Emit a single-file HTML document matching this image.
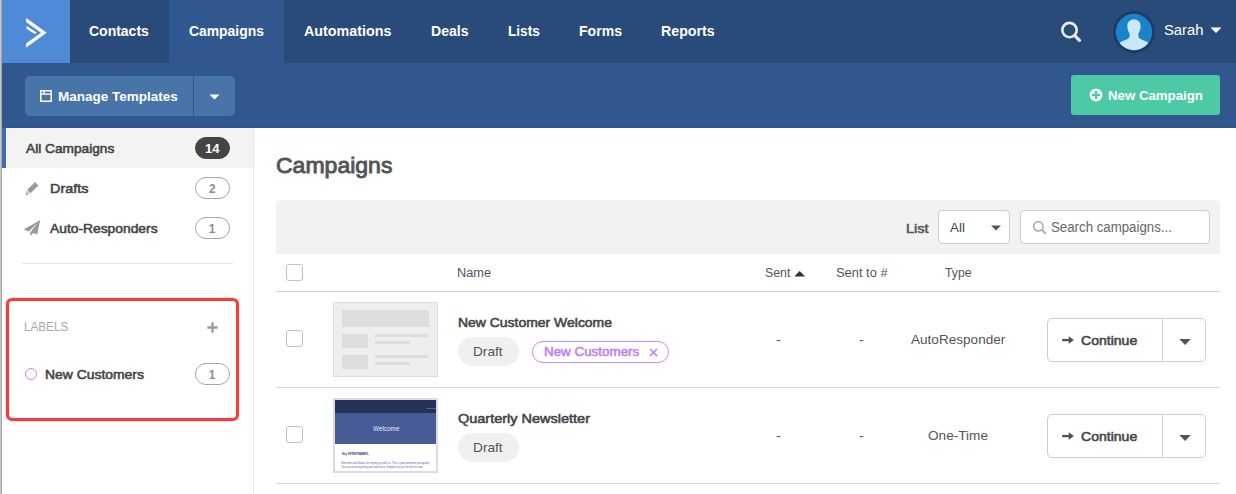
<!DOCTYPE html>
<html lang="en">
<head>
<meta charset="utf-8">
<title>Campaigns</title>
<style>
*{box-sizing:border-box;margin:0;padding:0}
html,body{width:1236px;height:494px;overflow:hidden;background:#fff}
body{position:relative;font-family:"Liberation Sans",sans-serif;color:#444;font-size:13px}
.abs{position:absolute}
.t{position:absolute;white-space:nowrap;line-height:1;transform-origin:0 0}
#strip{left:0;top:0;width:2px;height:494px;background:#a6a6a6;border-left:1px solid #c8c8c8}
#nav{left:2px;top:0;width:1234px;height:63px;background:#284b7a}
#logo{left:2px;top:0;width:68px;height:63px;background:#4f8ad6}
#navact{left:169px;top:0;width:115px;height:63px;background:#30588f}
#sub{left:2px;top:63px;width:1234px;height:65px;background:#30588f;border-bottom:1px solid #2b5288}
.nv{color:#fff;font-weight:bold;font-size:15px;top:23px}
#mt{left:25px;top:76px;width:210px;height:40px;background:#4874aa;border-radius:5px}
#mtdiv{left:193px;top:76px;width:1px;height:40px;background:#2c5389}
#nc{left:1071px;top:75px;width:149px;height:40px;background:#4ec9a6;border-radius:3px}
#side{left:2px;top:128px;width:252px;height:366px;background:#fff;border-right:1px solid #e4e4e4}
#sact{left:2px;top:128px;width:251px;height:40px;background:#f3f3f3;border-left:4px solid #3f6db3}
.sb{font-weight:normal;font-size:13px;color:#444;-webkit-text-stroke:0.55px #444}
.badge{position:absolute;left:195px;width:35px;height:22px;border-radius:11px;border:1px solid #a6a6a6;background:#fff}
.bt{font-weight:bold;font-size:12px;color:#8e8e8e}
.badge.dark{background:#444;border-color:#444;color:#fff}
#sdiv{left:22px;top:263px;width:211px;height:1px;background:#e2e2e2}
#red{left:6px;top:298px;width:233px;height:122.500px;border:3px solid #f53b3b;border-radius:6px;box-shadow:0 0 1.500px rgba(245,59,59,.7), inset 0 0 1px rgba(245,59,59,.6)}
#tool{left:276px;top:200px;width:944px;height:54px;background:#f2f2f2;border-radius:4px 4px 0 0}
.inp{position:absolute;top:210px;height:34px;background:#fff;border:1px solid #ccc;border-radius:4px}
.hl{position:absolute;left:276px;width:944px;height:1px;background:#ddd}
.cb{position:absolute;left:286px;width:17px;height:17px;border:1px solid #c2c2c2;border-radius:3px;background:#fff}
.th{font-size:12.5px;color:#555;top:266px}
.td{font-size:13.5px;color:#555}
.ttl{font-weight:normal;font-size:13px;color:#444;-webkit-text-stroke:0.55px #444}
.pill{position:absolute;left:458px;width:61px;height:29px;border-radius:14.5px;background:#f0f0f0}
.pt{font-size:13px;color:#555}
.btn{position:absolute;left:1047px;width:159px;height:44px;border:1px solid #ccc;border-radius:5px;background:#fff}
.btn i{position:absolute;left:114px;top:0;width:1px;height:42px;background:#ccc}
.thumb{position:absolute;left:333px;width:105px;height:75px;border:1px solid #ddd;background:#eee;overflow:hidden}
</style>
</head>
<body>
<div id="nav" class="abs"></div>
<div id="sub" class="abs"></div>
<div id="logo" class="abs"></div>
<div id="navact" class="abs"></div>
<div id="strip" class="abs"></div>
<svg class="abs" style="left:20px;top:12px" width="34" height="40" viewBox="20 12 34 40"><path d="M26.300 18.300 L46.400 32.700 L26.300 47.300 L26.300 43.500 L41.300 32.700 L26.300 22.100 Z" fill="#fff" stroke="#fff" stroke-width="0.400" stroke-linejoin="round"/><path d="M26.600 26.000 L36.800 32.400 L35.000 33.900 L26.600 28.900 Z" fill="#fff"/></svg>
<span id="t1" class="t nv" style="left:89.4px;top:23px;font-size:15px;transform:scaleX(0.932)">Contacts</span>
<span id="t2" class="t nv" style="left:189.1px;top:23px;font-size:15px;transform:scaleX(0.926)">Campaigns</span>
<span id="t3" class="t nv" style="left:303.7px;top:23px;font-size:15px;transform:scaleX(0.954)">Automations</span>
<span id="t4" class="t nv" style="left:430.9px;top:23px;font-size:15px;transform:scaleX(0.937)">Deals</span>
<span id="t5" class="t nv" style="left:507.9px;top:23px;font-size:15px;transform:scaleX(0.908)">Lists</span>
<span id="t6" class="t nv" style="left:578.6px;top:23px;font-size:15px;transform:scaleX(0.937)">Forms</span>
<span id="t7" class="t nv" style="left:660.7px;top:23px;font-size:15px;transform:scaleX(0.946)">Reports</span>
<svg class="abs" style="left:1058px;top:18px" width="28" height="28" viewBox="1058 18 28 28"><circle cx="1069.500" cy="30.100" r="7.200" fill="none" stroke="#e9ebf0" stroke-width="2.600"/><path d="M1074.800 35.600 L1079.500 40.300" stroke="#e9ebf0" stroke-width="3.200" stroke-linecap="round"/></svg>
<svg class="abs" style="left:1113px;top:11px" width="42" height="42" viewBox="0 0 42 42"><defs><clipPath id="av"><circle cx="21" cy="21" r="18.200"/></clipPath></defs><circle cx="21" cy="21" r="20.900" fill="#1f3a63"/><circle cx="21" cy="21" r="18.200" fill="#1b82cc"/><g clip-path="url(#av)" fill="#c9e9fb"><path d="M21 8.600 c4.200 0 6.600 2.600 6.600 6.400 c0 2.200 -0.400 4.400 -1.400 6 c-0.500 0.900 -0.800 1.600 -0.800 2.600 v1.600 c0 1.400 1.200 2.400 3 3.200 c3.400 1.500 7.600 2.600 9.600 5.600 v8 h-34 v-8 c2 -3 6.200 -4.100 9.600 -5.600 c1.800 -0.800 3 -1.800 3 -3.200 v-1.600 c0 -1 -0.300 -1.700 -0.800 -2.600 c-1 -1.600 -1.400 -3.800 -1.400 -6 c0 -3.800 2.400 -6.400 6.600 -6.400z"/></g></svg>
<span id="t8" class="t" style="left:1164.4px;top:23px;color:#fff;font-size:14px;transform:scaleX(1.055)">Sarah</span>
<svg class="abs" style="left:1209.600px;top:26.800px" width="12" height="7" viewBox="0 0 12 7"><path d="M0.500 0.500 h11 l-5.500 5.500z" fill="#fff"/></svg>

<div id="mt" class="abs"></div>
<div id="mtdiv" class="abs"></div>
<svg class="abs" style="left:40px;top:90px" width="12" height="12" viewBox="0 0 12 12"><rect x="0.750" y="0.750" width="10.500" height="10.500" fill="none" stroke="#fff" stroke-width="1.500"/><path d="M0.750 4.200 h10.500 M4 0.750 v3.400" stroke="#fff" stroke-width="1.300" fill="none"/></svg>
<span id="t9" class="t" style="left:57.6px;top:90px;color:#fff;font-weight:bold;font-size:13px;transform:scaleX(1.039)">Manage Templates</span>
<svg class="abs" style="left:209px;top:94px" width="11" height="6" viewBox="0 0 11 6"><path d="M0.500 0.500 h10 l-5 5z" fill="#fff"/></svg>
<div id="nc" class="abs"></div>
<svg class="abs" style="left:1089px;top:88px" width="14" height="14" viewBox="0 0 14 14"><circle cx="7" cy="7" r="6.400" fill="#fff"/><path d="M7 3 v8 M3 7 h8" stroke="#4ec9a6" stroke-width="2.400"/></svg>
<span id="t10" class="t" style="left:1108.4px;top:89px;color:#fff;font-weight:bold;font-size:13px;transform:scaleX(1.018)">New Campaign</span>

<div id="side" class="abs"></div>
<div id="sact" class="abs"></div>
<span id="t11" class="t sb" style="left:26.1px;top:142px;font-size:13px;transform:scaleX(1.053)">All Campaigns</span>
<span class="badge dark" style="top:137px"></span><span id="t39" class="t bt" style="left:205.0px;top:143px;color:#fff;font-size:12px;transform:scaleX(1.092)">14</span>
<svg class="abs" style="left:24px;top:180px" width="16" height="16" viewBox="24 180 16 16"><path d="M35.000 182.000 L38.400 185.400 L30.500 193.300 L27.100 189.900 Z" fill="#999"/><path d="M26.500 190.500 L29.900 193.900 L25.700 194.900 Z" fill="#b8b8b8"/><path d="M26.000 193.300 L27.300 194.500 L25.700 194.900 Z" fill="#888"/></svg>
<span id="t12" class="t sb" style="left:49.6px;top:182px;font-size:13px;transform:scaleX(1.107)">Drafts</span>
<span class="badge" style="top:177px"></span><span id="t40" class="t bt" style="left:209px;top:183px">2</span>
<svg class="abs" style="left:23px;top:219px" width="18" height="18" viewBox="23 219 18 18"><path d="M40.200 220.100 L23.800 229.400 L28.800 231.600 L37.400 223.000 L30.300 232.400 L30.400 236.100 L33.200 233.000 L37.200 234.600 Z" fill="#999"/></svg>
<span id="t13" class="t sb" style="left:49.7px;top:222px;font-size:13px;transform:scaleX(1.063)">Auto-Responders</span>
<span class="badge" style="top:217px"></span><span id="t41" class="t bt" style="left:208.800px;top:223px">1</span>
<div id="sdiv" class="abs"></div>
<div id="red" class="abs"></div>
<span id="t14" class="t" style="left:24.4px;top:321px;font-size:12px;color:#a8a8a8;transform:scaleX(0.975)">LABELS</span>
<svg class="abs" style="left:206.600px;top:322.400px" width="11" height="11" viewBox="0 0 11 11"><path d="M5.500 0.300 v10.400 M0.300 5.500 h10.400" stroke="#999" stroke-width="2.300"/></svg>
<div class="abs" style="left:25px;top:368px;width:12px;height:12px;border:1.500px solid #c685f5;border-radius:50%"></div>
<span id="t15" class="t sb" style="left:45.2px;top:368px;font-size:13px;transform:scaleX(1.070)">New Customers</span>
<span class="badge" style="top:363px"></span><span id="t42" class="t bt" style="left:208.800px;top:369px">1</span>

<span id="t16" class="t" style="left:276.4px;top:155px;font-size:22px;font-weight:normal;-webkit-text-stroke:0.9px #555;color:#555;transform:scaleX(1.046)">Campaigns</span>
<div id="tool" class="abs"></div>
<span id="t17" class="t" style="left:905.6px;top:222px;font-weight:normal;-webkit-text-stroke:0.55px #555;font-size:13px;color:#555;transform:scaleX(1.112)">List</span>
<div class="inp" style="left:938px;width:72px"></div>
<span id="t18" class="t" style="left:950.3px;top:221px;font-size:13.5px;color:#444;transform:scaleX(0.991)">All</span>
<svg class="abs" style="left:991px;top:225px" width="10" height="6" viewBox="0 0 10 6"><path d="M0 0.500 h10 l-5 5z" fill="#555"/></svg>
<div class="inp" style="left:1020px;width:190px"></div>
<svg class="abs" style="left:1032px;top:220px" width="15" height="15" viewBox="0 0 15 15"><circle cx="6.300" cy="6.300" r="4.700" fill="none" stroke="#adadad" stroke-width="1.700"/><path d="M9.800 9.800 L13.800 13.800" stroke="#adadad" stroke-width="2"/></svg>
<span id="t19" class="t" style="left:1050.7px;top:220px;font-size:14px;color:#666;transform:scaleX(0.947)">Search campaigns...</span>

<div class="cb" style="top:264px"></div>
<span id="t20" class="t th" style="left:457.4px;top:267px;font-size:12px;transform:scaleX(1.067)">Name</span>
<span id="t21" class="t th" style="left:764.8px;top:267px;font-size:12px;transform:scaleX(1.030)">Sent</span>
<svg class="abs" style="left:794px;top:270px" width="12" height="8" viewBox="794 270 12 8"><path d="M794.300 276.400 h10.800 l-5.400 -5.400z" fill="#333"/></svg>
<span id="t22" class="t th" style="left:835.5px;top:267px;font-size:12px;transform:scaleX(1.073)">Sent to #</span>
<span id="t23" class="t th" style="left:945.1px;top:267px;font-size:12px;transform:scaleX(1.022)">Type</span>
<div class="hl" style="top:291px;background:#ccc"></div>

<div class="cb" style="top:330px"></div>
<div class="thumb" style="top:302px">
 <div class="abs" style="left:8px;top:7px;width:87px;height:17px;background:#ddd"></div>
 <div class="abs" style="left:8px;top:31px;width:26px;height:14px;background:#ddd"></div>
 <div class="abs" style="left:41px;top:31px;width:53px;height:3px;background:#ddd"></div>
 <div class="abs" style="left:41px;top:38px;width:34.500px;height:3px;background:#ddd"></div>
 <div class="abs" style="left:8px;top:52px;width:26px;height:14px;background:#ddd"></div>
 <div class="abs" style="left:41px;top:52px;width:53px;height:3px;background:#ddd"></div>
 <div class="abs" style="left:41px;top:59px;width:34.500px;height:3px;background:#ddd"></div>
</div>
<span id="t24" class="t ttl" style="left:458.1px;top:316px;font-size:13px;transform:scaleX(1.073)">New Customer Welcome</span>
<span class="pill" style="top:337px"></span><span id="t43" class="t pt" style="left:473.4px;top:345px;font-size:13px;transform:scaleX(1.049)">Draft</span>
<div class="abs" style="left:532px;top:341px;width:137px;height:22px;border:1px solid #c98cf7;border-radius:11px;background:#fff"></div>
<span id="t25" class="t" style="left:544.3px;top:346px;font-weight:normal;-webkit-text-stroke:0.5px #c07df0;font-size:12.5px;color:#c07df0;transform:scaleX(1.071)">New Customers</span>
<svg class="abs" style="left:649px;top:348px" width="9" height="9" viewBox="0 0 9 9"><path d="M1 1 L8 8 M8 1 L1 8" stroke="#c07df0" stroke-width="1.500"/></svg>
<span id="t26" class="t td" style="left:775.5px;top:333px;font-size:13px;transform:scaleX(1.111)">-</span>
<span id="t27" class="t td" style="left:859.3px;top:333px;font-size:13px;transform:scaleX(1.071)">-</span>
<span id="t28" class="t td" style="left:910.9px;top:333px;font-size:13px;transform:scaleX(1.044)">AutoResponder</span>
<div class="btn" style="top:318px"><i></i></div>
<svg class="abs" style="left:1061px;top:335px" width="14" height="10" viewBox="1061 335 14 10"><path d="M1062.100 340.100 h7.500" stroke="#555" stroke-width="2.300"/><path d="M1068.700 336.200 L1073.900 340.100 L1068.700 344.000z" fill="#555"/></svg>
<span id="t29" class="t" style="left:1081.2px;top:334px;font-weight:normal;-webkit-text-stroke:0.55px #444;font-size:13px;color:#444;transform:scaleX(1.081)">Continue</span>
<svg class="abs" style="left:1179px;top:338px" width="13" height="8" viewBox="1179 338 13 8"><path d="M1179.300 338.900 h11.600 l-5.800 6.100z" fill="#555"/></svg>
<div class="hl" style="top:387px"></div>

<div class="cb" style="top:426px"></div>
<div class="thumb" style="top:398px;background:#fff;border:2px solid #dcdcdc">
 <div class="abs" style="left:0;top:0;width:101px;height:13px;background:#27325a"></div>
 <div class="abs" style="left:0;top:13px;width:101px;height:31px;background:#475c96"></div>
</div>
<span id="t30" class="t" style="left:373.4px;top:425px;font-size:7px;color:#e6eaf5;transform:scaleX(0.910)">Welcome</span>
<span id="t45" class="t" style="left:426px;top:408.300px;font-size:2.500px;color:#aeb6cc;transform:scaleX(.76)">WELCOME</span>
<span id="t31" class="t" style="left:341.8px;top:452.7px;font-size:3px;color:#2a3160;font-weight:bold;transform:scaleX(0.900)">Hey %FIRSTNAME%,</span>
<span id="t32" class="t" style="left:341.4px;top:461.9px;font-size:3px;color:#5661a8;transform:scaleX(0.871)">Welcome and thanks for signing up with us. This is your welcome paragraph.</span>
<span id="t33" class="t" style="left:341.4px;top:466.3px;font-size:3px;color:#5661a8;transform:scaleX(0.887)">You can write anything you want here. Simply click on the text to start</span>
<span id="t34" class="t ttl" style="left:458.4px;top:412px;font-size:13px;transform:scaleX(1.114)">Quarterly Newsletter</span>
<span class="pill" style="top:433px"></span><span id="t44" class="t pt" style="left:473.4px;top:441px;font-size:13px;transform:scaleX(1.053)">Draft</span>
<span id="t35" class="t td" style="left:775.5px;top:429px;font-size:13px;transform:scaleX(1.111)">-</span>
<span id="t36" class="t td" style="left:859.3px;top:429px;font-size:13px;transform:scaleX(1.071)">-</span>
<span id="t37" class="t td" style="left:927.9px;top:429px;font-size:13px;transform:scaleX(1.046)">One-Time</span>
<div class="btn" style="top:414px"><i></i></div>
<svg class="abs" style="left:1061px;top:431px" width="14" height="10" viewBox="1061 335 14 10"><path d="M1062.100 340.100 h7.500" stroke="#555" stroke-width="2.300"/><path d="M1068.700 336.200 L1073.900 340.100 L1068.700 344.000z" fill="#555"/></svg>
<span id="t38" class="t" style="left:1081.2px;top:430px;font-weight:normal;-webkit-text-stroke:0.55px #444;font-size:13px;color:#444;transform:scaleX(1.081)">Continue</span>
<svg class="abs" style="left:1179px;top:434px" width="13" height="8" viewBox="1179 338 13 8"><path d="M1179.300 338.900 h11.600 l-5.800 6.100z" fill="#555"/></svg>
<div class="hl" style="top:483px"></div>
</body>
</html>
